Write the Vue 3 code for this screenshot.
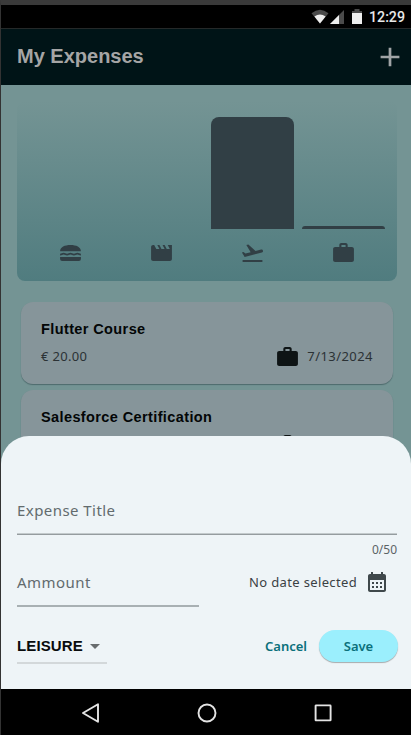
<script setup>
const icons = {
  burger: 'M22 10.2C22 6 17.5 4 12 4S2 6 2 10.2zM2 16h20v2a2 2 0 0 1-2 2H4a2 2 0 0 1-2-2zM2 12.7c1.2 0 1.9-1 3.4-1s2 1 3.3 1 1.8-1 3.3-1 2 1 3.3 1 1.8-1 3.3-1 2.2 1 3.4 1v1.9c-1.7 0-2.2-1-3.4-1s-1.8 1-3.3 1-2-1-3.3-1-1.8 1-3.3 1-2.1-1-3.3-1-1.7 1-3.4 1z',
  movie: 'M18 4l2 4h-3l-2-4h-2l2 4h-3l-2-4H8l2 4H7L5 4H4c-1.1 0-2 .9-2 2v12c0 1.1.9 2 2 2h16c1.1 0 2-.9 2-2V4h-4z',
  flight: 'M2.5 19h19v2h-19zM22.07 9.64c-.21-.8-1.04-1.28-1.84-1.06L14.92 10l-6.9-6.43-1.93.51 4.14 7.17-4.97 1.33-1.97-1.54-1.45.39 2.59 4.49L21 11.49c.81-.23 1.28-1.05 1.07-1.85z',
  work: 'M20 6h-4V4c0-1.11-.89-2-2-2h-4c-1.11 0-2 .89-2 2v2H4c-1.11 0-1.99.89-1.99 2L2 19c0 1.11.89 2 2 2h16c1.11 0 2-.89 2-2V8c0-1.11-.89-2-2-2zm-6 0h-4V4h4v2z',
  calendar: 'M19 4h-1V2h-2v2H8V2H6v2H5c-1.1 0-2 .9-2 2v14c0 1.1.9 2 2 2h14c1.1 0 2-.9 2-2V6c0-1.1-.9-2-2-2zm0 16H5V10h14v10zM7 12h2v2H7zM11 12h2v2h-2zM15 12h2v2h-2zM7 16h2v2H7zM11 16h2v2h-2zM15 16h2v2h-2z'
}
const buckets = [
  { icon: 'burger', fill: 0 },
  { icon: 'movie', fill: 0 },
  { icon: 'flight', fill: 100 },
  { icon: 'work', fill: 2.7 }
]
const expenses = [
  { title: 'Flutter Course', amount: '€ 20.00', date: '7/13/2024' },
  { title: 'Salesforce Certification', amount: '€ 200.00', date: '7/13/2024' }
]
</script>

<template>
  <div class="device">
    <div class="status">
      <svg class="wifi" width="18" height="15" viewBox="0 0 18 15"><path d="M.5 4.2Q9-2.9 17.5 4.2L9 14.5z" fill="#4b4b4b"/><path d="M3.4 7.6Q9 3.6 14.6 7.6L9 14.5z" fill="#eee"/></svg>
      <svg class="signal" width="14" height="14" viewBox="0 0 14 14"><path d="M14 0v14H0z" fill="#4b4b4b"/><path d="M9 5v9H0z" fill="#eee"/></svg>
      <svg class="battery" width="10" height="15" viewBox="0 0 10 15"><path d="M0 2h2.5V0h5v2H10v3H0z" fill="#4b4b4b"/><path d="M0 4h10v11H0z" fill="#eee"/></svg>
      <span class="clock">12:29</span>
    </div>
    <header class="appbar">
      <h1>My Expenses</h1>
      <svg width="20" height="20" viewBox="0 0 20 20"><path d="M10 .8v18.4M.6 10h18.8" stroke="#a0a4a6" stroke-width="2.7"/></svg>
    </header>
    <main class="content">
      <section class="chart">
        <div class="bars">
          <div v-for="b in buckets" :key="b.icon" class="slot">
            <div class="bar" :style="{ height: b.fill + '%' }"></div>
          </div>
        </div>
        <div class="legend">
          <div v-for="b in buckets" :key="b.icon"><svg width="25" height="24" viewBox="0 0 24 24" preserveAspectRatio="none"><path :d="icons[b.icon]"/></svg></div>
        </div>
      </section>
      <section class="list">
        <article v-for="e in expenses" :key="e.title" class="card">
          <h2>{{ e.title }}</h2>
          <div class="meta">
            <span class="amount">{{ e.amount }}</span>
            <svg width="25" height="24" viewBox="0 0 24 24" preserveAspectRatio="none"><path :d="icons.work"/></svg>
            <span class="date">{{ e.date }}</span>
          </div>
        </article>
      </section>
    </main>
    <form class="sheet" @submit.prevent>
      <div class="field title-field"><span>Expense Title</span></div>
      <div class="counter">0/50</div>
      <div class="row">
        <div class="field amount-field"><span>Ammount</span></div>
        <div class="picker">
          <span>No date selected</span>
          <svg width="24" height="24" viewBox="0 0 24 24"><path fill-rule="evenodd" :d="icons.calendar"/></svg>
        </div>
      </div>
      <div class="actions">
        <div class="select"><span>LEISURE</span><i></i></div>
        <button class="cancel">Cancel</button>
        <button class="save">Save</button>
      </div>
    </form>
    <nav class="nav">
      <svg width="20" height="20" viewBox="0 0 20 20"><path d="M17 1.2v17.6L2 10z"/></svg>
      <svg width="20" height="20" viewBox="0 0 20 20"><circle cx="10" cy="10" r="8.5"/></svg>
      <svg width="20" height="20" viewBox="0 0 20 20"><rect x="2.6" y="2.4" width="15" height="15" rx=".5"/></svg>
    </nav>
  </div>
</template>

<style>
body { background: #000; overflow: hidden; }
</style>
<style scoped>
* { box-sizing: border-box; }
svg { display: block; flex: none; }
h1, h2 { margin: 0; }
.device {
  position: relative;
  display: flex;
  flex-direction: column;
  width: 411px;
  height: 735px;
  overflow: hidden;
  border-left: 1px solid #333;
  border-top: 5px solid #3a3a3a;
  background: #000;
  font-family: "Noto Sans", sans-serif;
  white-space: nowrap;
}
.status {
  display: flex;
  align-items: center;
  justify-content: flex-end;
  height: 24px;
  flex: none;
  padding-right: 6px;
  border-bottom: 1px solid #252929;
}
.signal { margin-left: 1px; }
.battery { margin-left: 8px; }
.clock { margin-left: 7px; padding-top: 1px; font: 500 14.2px/20px Roboto, sans-serif; color: #e8e8e8; }
.appbar {
  display: flex;
  align-items: center;
  justify-content: space-between;
  height: 56px;
  flex: none;
  padding: 0 11px 0 16px;
  background: #001417;
}
.appbar h1 { padding-bottom: 2px; font: bold 20px/24px "Liberation Sans", sans-serif; color: #a5a5a5; }
.content { flex: 1; min-height: 0; overflow: hidden; padding: 16px 14px 0 16px; background: #749494; }
.chart {
  height: 180px;
  padding: 16px 8px;
  border-radius: 8px;
  background: linear-gradient(to top, #507c7f, #749494);
}
.bars { display: flex; height: 112px; }
.slot { flex: 1; display: flex; align-items: flex-end; padding: 0 4px; }
.bar { width: 100%; border-radius: 8px 8px 0 0; background: #313f45; }
.legend { display: flex; height: 24px; margin-top: 12px; fill: #313f45; }
.legend div { flex: 1; display: flex; justify-content: center; }
.list { display: flex; flex-direction: column; gap: 6px; padding: 21px 4px 0; }
.card {
  height: 82px;
  flex: none;
  padding: 17px 20px 0;
  border-radius: 12px;
  background: #86959a;
  box-shadow: 0 1px 1px rgba(20, 45, 50, .4);
}
.card h2 { font: bold 14.5px/20px "Liberation Sans", sans-serif; letter-spacing: .39px; color: #030606; }
.meta { display: flex; align-items: center; height: 24px; margin-top: 5px; font-size: 13px; letter-spacing: .3px; color: #2b3235; }
.meta svg { margin-left: auto; margin-top: 1px; fill: #0e1415; }
.date { margin-left: 7px; letter-spacing: .44px; }
.sheet {
  position: absolute;
  left: 0;
  right: 0;
  top: 431px;
  height: 253px;
  padding: 50px 13px 0 16px;
  border-radius: 28px 28px 0 0;
  background: #eef4f7;
}
.field { height: 49px; padding-top: 12px; border-bottom: 2px solid #a8b0b3; font-size: 15px; line-height: 24px; letter-spacing: .44px; color: #626b6e; }
.title-field { width: 380px; border-bottom: 1px solid #959c9f; box-shadow: inset 0 -1px #c3cacc; }
.counter { width: 380px; height: 23px; padding-top: 6px; text-align: right; font-size: 12px; line-height: 18px; color: #5b6366; }
.row { display: flex; }
.amount-field { width: 182px; }
.picker { display: flex; align-items: center; margin-left: auto; padding-right: 9px; height: 47px; font-size: 13px; letter-spacing: .35px; color: #3a4144; }
.picker svg { margin-left: 8px; fill: #3f484b; }
.actions { display: flex; align-items: center; margin-top: 23px; height: 34px; }
.select { display: flex; align-items: center; width: 90px; height: 34px; border-bottom: 2px solid #d3d8da; font: bold 15px/20px "Liberation Sans", sans-serif; letter-spacing: .12px; color: #090c0d; }
.select i { margin-left: 7px; border: 5px solid transparent; border-top-color: #686c6e; border-bottom: 0; }
button { border: 0; padding: 0; font: 600 13px/20px "Noto Sans", sans-serif; color: #0b707b; }
.cancel { margin: 0 0 2px auto; background: none; }
.save { width: 79px; height: 32px; margin: 0 0 2px 12px; border-radius: 16px; background: #9beffd; box-shadow: 0 1px 1px rgba(0, 0, 0, .3); }
.nav {
  display: flex;
  align-items: center;
  justify-content: center;
  gap: 96px;
  height: 46px;
  flex: none;
  padding-top: 2px;
  padding-left: 2px;
  background: #000;
}
.nav svg { fill: none; stroke: #e4e4e4; stroke-width: 1.9; stroke-linejoin: round; }
</style>
